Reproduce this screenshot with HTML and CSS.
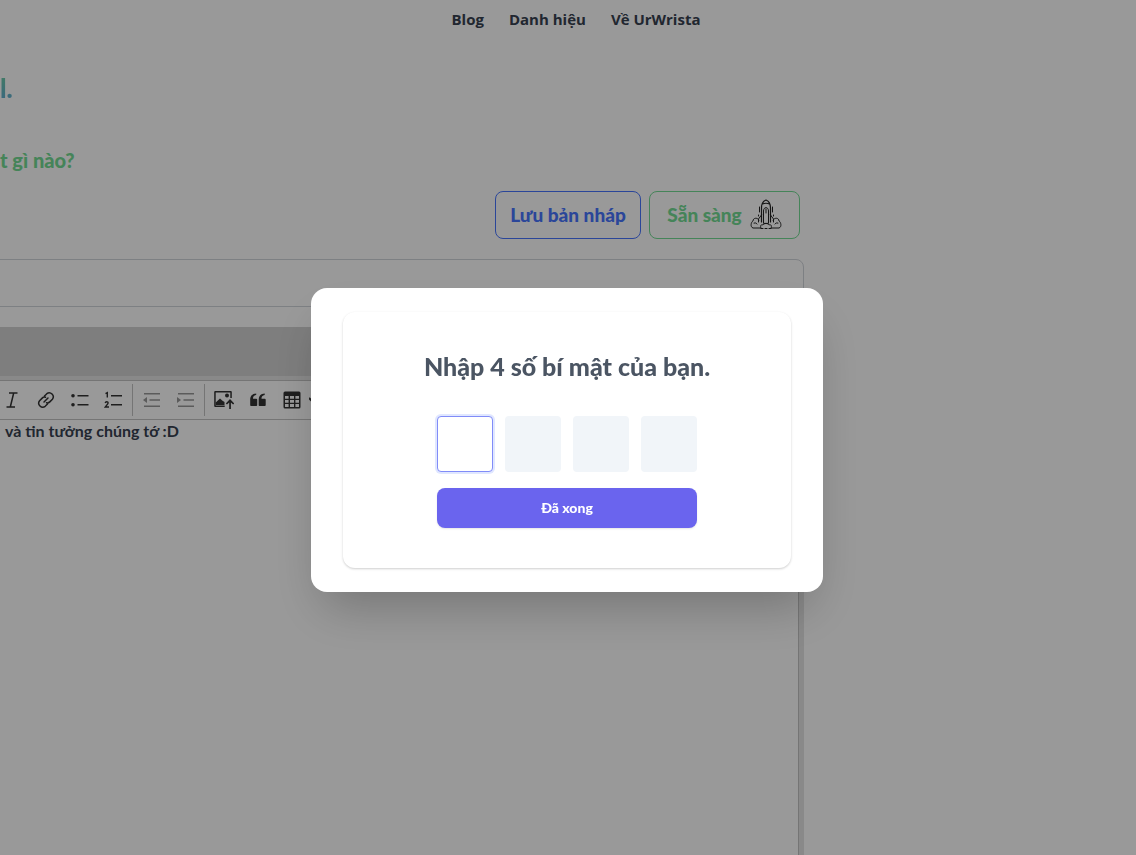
FILE: index.html
```html
<!DOCTYPE html>
<html lang="vi">
<head>
<meta charset="utf-8">
<title>UrWrista</title>
<link rel="stylesheet" href="styles.css">
</head>
<body>
<nav class="nav">
  <a href="#blog">Blog</a>
  <a href="#danh-hieu">Danh hiệu</a>
  <a href="#ve">Về UrWrista</a>
</nav>
<main class="page">
  <div class="content">
    <h1 class="title">l.</h1>
    <h2 class="subtitle">t gì nào?</h2>
    <div class="actions">
      <button class="btn btn-draft" type="button">Lưu bản nháp</button>
      <button class="btn btn-ready" type="button">Sẵn sàng
        <svg class="rocket" viewBox="0 0 32 32" fill="none" stroke="#222" stroke-width="1" stroke-linecap="round" stroke-linejoin="round">
          <path d="M11.500 24V10c0-4 2-7 4.500-8 2.500 1 4.500 4 4.500 8v14M12.500 6q3.500-1.500 7 0" stroke-width="1.200"/>
          <path d="M13.500 25V13c0-4.500 5-4.500 5 0v12zM16 11v4M11.500 17l-3 4v3M20.500 17l3 4v3"/>
          <path d="M9.500 9v5M22.500 9v5M8.500 17v1M23.500 17v1"/>
          <path d="M9 22c-2-3-6-2-6 1-2 1-3 6 0 7h8c-1-2 0-4 2-3 1-2 5-2 6 0 2-1 3 1 2 3h8c3-1 2-6 0-7 0-3-4-4-6-1M4 25q2-1 3 1M28 25q-2-1-3 1"/>
          <path d="M11 30.500h10" stroke-dasharray="2 2"/>
        </svg>
      </button>
    </div>
    <input class="title-input" type="text" aria-label="Tiêu đề">
    <section class="editor">
      <div class="band"></div>
      <div class="editor-box">
        <div class="toolbar">
          <button class="tool" type="button" aria-label="Italic"><svg class="line" viewBox="0 0 20 20"><path d="M7 3h8.500M4.500 17H13M11.700 3L8.300 17"/></svg></button>
          <button class="tool" type="button" aria-label="Link"><svg class="line" viewBox="0 0 20 20" stroke-linecap="round"><path d="M8.500 6l2.300-2.300a4 4 0 0 1 5.600 5.600l-2.600 2.600a3.500 3.500 0 0 1-3.300.9M11.500 14l-2.300 2.300a4 4 0 0 1-5.600-5.600l2.600-2.600a3.500 3.500 0 0 1 3.300-.9M8 12l4-4"/></svg></button>
          <button class="tool" type="button" aria-label="Bulleted List"><svg viewBox="0 0 20 20"><path d="M7.500 5h11v1.500h-11zM7.500 14h11v1.500h-11z"/><circle cx="3" cy="5.700" r="1.800"/><circle cx="3" cy="14.700" r="1.800"/></svg></button>
          <button class="tool" type="button" aria-label="Numbered List"><svg viewBox="0 0 20 20"><path d="M7 5h11v1.500H7zM7 14h11v1.500H7z"/><path d="M1.500 3.600L3.300 2.700V7.500M1.200 13q.3-1.300 1.500-1.300c2 0 1.600 1.700.6 2.700L1.300 17H5" fill="none" stroke="#333" stroke-width="1.400"/></svg></button>
          <span class="sep"></span>
          <button class="tool tool-off" type="button" disabled aria-label="Decrease indent"><svg viewBox="0 0 20 20"><path d="M2 3h16v1.500H2zM7.500 9.300H18v1.500H7.500zM2 15.500h16V17H2zM5 7v6L1 10z"/></svg></button>
          <button class="tool tool-off" type="button" disabled aria-label="Increase indent"><svg viewBox="0 0 20 20"><path d="M2 3h16v1.500H2zM7.500 9.300H18v1.500H7.500zM2 15.500h16V17H2zM1 7v6l4-3z"/></svg></button>
          <span class="sep"></span>
          <button class="tool" type="button" aria-label="Insert image"><svg viewBox="0 0 20 20"><path d="M1.200 1h15.600q1 0 1 1v6h-1.500V2.500H1.700v13h9V17H1.200q-1 0-1-1V2q0-1 1-1z"/><circle cx="13" cy="5.500" r="2"/><path d="M1.700 15v-2.500L6 8.500l2.500 2.200L10.500 12v3zM16 9l4.300 4.500-1.200 1.100-2.200-2.200V19h-1.700v-6.600L13 14.600l-1.200-1.100z"/></svg></button>
          <button class="tool" type="button" aria-label="Block quote"><svg viewBox="0 0 20 20"><path d="M2.200 10c0-4 2-6.300 6-6.500v1.400C5.900 5.200 5 6.500 5 8.800h3.300q.9 0 .9.900v5.600q0 .7-.9.700H3q-.8 0-.8-.7zM10.700 10c0-4 2-6.300 6-6.500v1.400c-2.300.3-3.200 1.600-3.200 3.900h3.300q.9 0 .9.900v5.600q0 .7-.9.700h-5.300q-.8 0-.8-.7z"/></svg></button>
          <button class="tool" type="button" aria-label="Insert table"><svg viewBox="0 0 20 20"><path d="M3 1.500h14q1.500 0 1.500 1.500v14q0 1.500-1.500 1.500H3Q1.500 18.500 1.500 17V3Q1.500 1.500 3 1.500zM3 6v2.700h3.600V6zm5 0v2.700h4V6zm5.400 0v2.700H17V6zM3 10v2.700h3.600V10zm5 0v2.700h4V10zm5.400 0v2.700H17V10zM3 14v3h3.600v-3zm5 0v3h4v-3zm5.400 0v3H17v-3z" fill-rule="evenodd"/></svg></button>
          <button class="tool tool-arrow" type="button" aria-label="Table menu"><svg viewBox="0 0 10 10"><path d="M0 3l4 4 4-4" fill="none" stroke="#333" stroke-width="2"/></svg></button>
        </div>
        <p class="editor-text">và tin tưởng chúng tớ :D</p>
      </div>
    </section>
  </div>
</main>
<div class="overlay">
  <div class="modal" role="dialog" aria-modal="true" aria-labelledby="pin-title">
    <form class="card">
      <h2 class="card-title" id="pin-title">Nhập 4 số bí mật của bạn.</h2>
      <div class="pin">
        <div class="digits">
          <input class="digit digit-active" type="text" maxlength="1" aria-label="Số 1">
          <input class="digit" type="text" maxlength="1" aria-label="Số 2">
          <input class="digit" type="text" maxlength="1" aria-label="Số 3">
          <input class="digit" type="text" maxlength="1" aria-label="Số 4">
        </div>
        <button class="submit" type="button">Đã xong</button>
      </div>
    </form>
  </div>
</div>
</body>
</html>
```
FILE: styles.css
```css
* { box-sizing: border-box; }

body {
  margin: 0;
  min-height: 100vh;
  display: flex;
  flex-direction: column;
  overflow: hidden;
  background: #fff;
  color: #374151;
  font-family: Lato, Inter, sans-serif;
}

h1, h2, p { margin: 0; }
button, input { font-family: inherit; }

.nav {
  display: flex;
  justify-content: center;
  gap: 25px;
  padding: 7px 0 9px 16px;
  font: 700 15px/24px "Open Sans", "Noto Sans", sans-serif;
}
.nav a { color: #374151; text-decoration: none; }

.page {
  flex: 1;
  display: grid;
  grid-template-columns: minmax(0, 1fr) 332px;
}
.content {
  display: flex;
  flex-direction: column;
}

.title {
  align-self: flex-start;
  margin-top: 24px;
  font-size: 26px;
  line-height: 48px;
  font-weight: 900;
  color: transparent;
  background: linear-gradient(to bottom, #74dc94, #5b9ee8);
  background-clip: text;
  -webkit-background-clip: text;
}
.subtitle {
  margin-top: 32px;
  font-size: 20px;
  line-height: 32px;
  font-weight: 900;
  color: #74dc94;
}

.actions {
  display: flex;
  justify-content: flex-end;
  gap: 8px;
  margin: 15px 4px 20px 0;
}
.btn {
  display: flex;
  align-items: center;
  justify-content: center;
  gap: 8px;
  height: 48px;
  min-width: 146px;
  padding: 0 14px 2px;
  border: 1px solid;
  border-radius: 8px;
  background: none;
  font-size: 19px;
  font-weight: 900;
}
.btn-draft { color: #4876ff; }
.btn-ready {
  min-width: 151px;
  color: #74dc94;
}
.rocket { width: 32px; height: 32px; }

.title-input {
  height: 48px;
  margin-left: -8px;
  border: 1px solid #d1d5db;
  border-radius: 8px;
  background: #fff;
}

.editor {
  flex: 1;
  display: flex;
  flex-direction: column;
  margin-top: 20px;
  padding-right: 5px;
  background: #e5e5e5;
}
.band {
  height: 49px;
  margin: 0 -5px 4px 0;
  background: #d2d2d2;
}
.editor-box {
  flex: 1;
  border: 1px solid #c4c4c4;
  border-left: 0;
  border-bottom: 0;
  background: #fff;
}
.toolbar {
  display: flex;
  align-items: center;
  height: 39px;
  padding: 3px 0;
  margin-left: -5px;
  border-bottom: 1px solid #c4c4c4;
}
.tool {
  display: flex;
  justify-content: center;
  width: 34px;
  padding: 0;
  border: 0;
  background: none;
}
.tool svg { width: 20px; height: 20px; fill: #333; }
.tool .line { fill: none; stroke: #333; stroke-width: 1.5; }
.tool-off { opacity: .5; }
.tool-arrow { width: 10px; }
.tool-arrow svg { width: 10px; height: 10px; }
.sep {
  width: 1px;
  height: 32px;
  margin: 0 2px 0 1px;
  background: #c4c4c4;
}
.editor-text {
  padding-left: 5px;
  font-size: 16px;
  line-height: 22px;
  font-weight: 700;
}

.overlay {
  position: fixed;
  inset: 0;
  display: flex;
  align-items: center;
  justify-content: center;
  padding: 25px 2px 0 0;
  background: rgba(0, 0, 0, .4);
}
.modal {
  width: 512px;
  max-width: 100%;
  padding: 24px 32px;
  border-radius: 16px;
  background: #fff;
  box-shadow: 0 25px 50px -12px rgba(0, 0, 0, .25);
}
.card {
  display: flex;
  flex-direction: column;
  align-items: center;
  gap: 34px;
  padding: 38px 32px 40px;
  border-radius: 12px;
  box-shadow: 0 1px 3px rgba(0, 0, 0, .1), 0 1px 2px rgba(0, 0, 0, .1);
}
.card-title {
  font-size: 25px;
  line-height: 32px;
  font-weight: 900;
  color: #4b5563;
}
.pin {
  display: flex;
  flex-direction: column;
  gap: 16px;
}
.digits { display: flex; gap: 12px; }
.digit {
  width: 56px;
  height: 56px;
  border: 1px solid transparent;
  border-radius: 4px;
  background: #f1f5f9;
  text-align: center;
  font-size: 24px;
}
.digit-active {
  border-color: #818cf8;
  background: #fff;
  box-shadow: 0 0 0 2px #e0e7ff;
}
.submit {
  height: 40px;
  padding-bottom: 2px;
  border: 0;
  border-radius: 8px;
  background: #6a64ee;
  color: #fff;
  font-size: 14px;
  font-weight: 900;
  box-shadow: 0 1px 2px rgba(0, 0, 0, .1);
}
```
